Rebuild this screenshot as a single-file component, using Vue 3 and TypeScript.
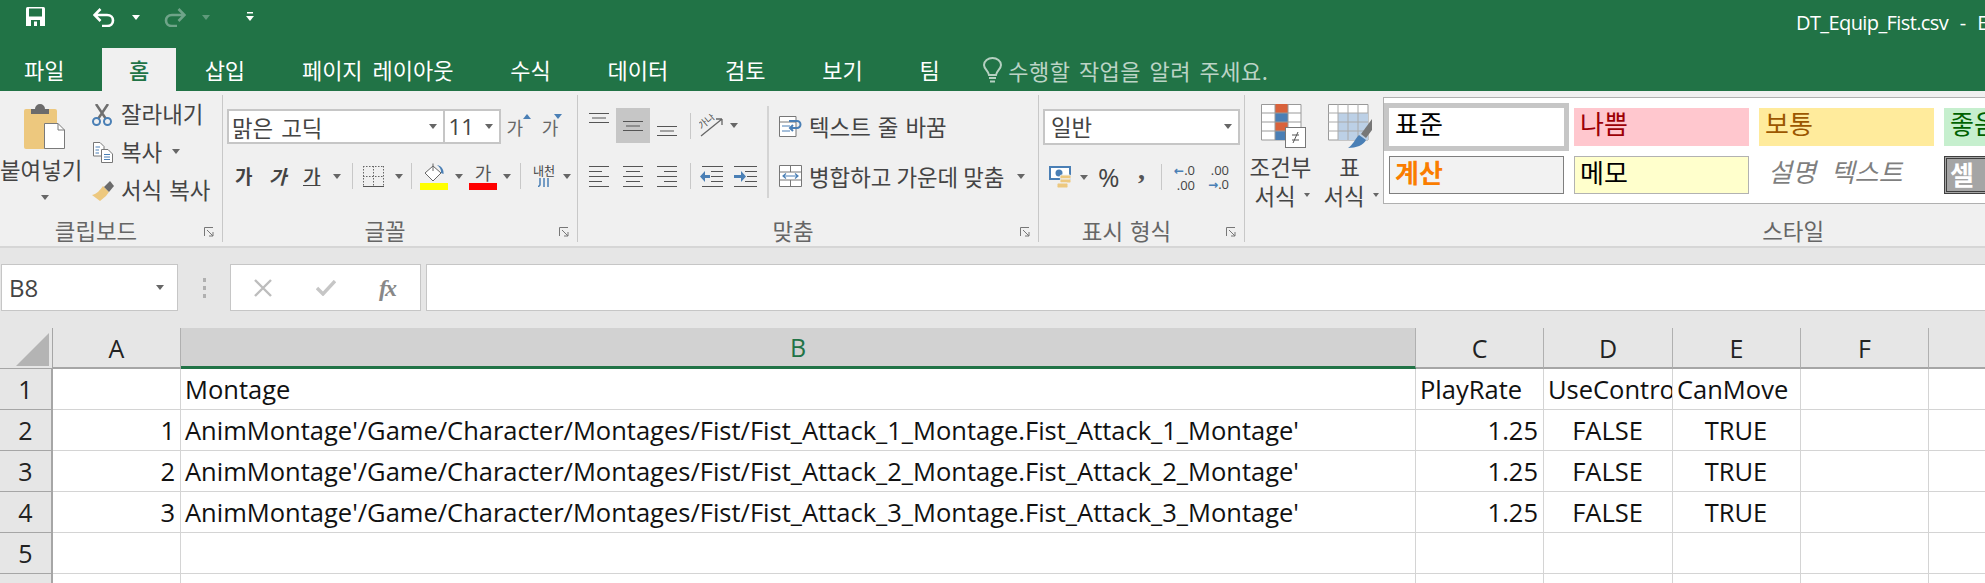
<script setup lang="ts">
interface Cell { text: string; align?: 'right' | 'center' }

const columns: string[] = ['A', 'B', 'C', 'D', 'E', 'F', '']
const path = (n: number): string =>
  `AnimMontage'/Game/Character/Montages/Fist/Fist_Attack_${n}_Montage.Fist_Attack_${n}_Montage'`
const dataRow = (n: number): Cell[] => [
  { text: String(n), align: 'right' },
  { text: path(n) },
  { text: '1.25', align: 'right' },
  { text: 'FALSE', align: 'center' },
  { text: 'TRUE', align: 'center' },
  { text: '' },
  { text: '' },
]
const blank: Cell[] = columns.map(() => ({ text: '' }))
const rows: Cell[][] = [
  [{ text: '' }, { text: 'Montage' }, { text: 'PlayRate' }, { text: 'UseControllerRotation' }, { text: 'CanMove' }, { text: '' }, { text: '' }],
  dataRow(1),
  dataRow(2),
  dataRow(3),
  blank,
  blank,
]
const tabs: string[] = ['삽입', '페이지 레이아웃', '수식', '데이터', '검토', '보기', '팀']
const styleCells: { label: string; cls: string }[] = [
  { label: '표준', cls: 'st-normal' },
  { label: '나쁨', cls: 'st-bad' },
  { label: '보통', cls: 'st-neutral' },
  { label: '좋음', cls: 'st-good' },
  { label: '계산', cls: 'st-calc' },
  { label: '메모', cls: 'st-note' },
  { label: '설명 텍스트', cls: 'st-explain' },
  { label: '셀 확인', cls: 'st-check' },
]
</script>

<template>
  <div class="app">
    <header class="titlebar">
      <svg class="qa-save" width="19" height="19" viewBox="0 0 19 19"><path d="M0 1.5Q0 0 1.5 0H17.5Q19 0 19 1.5V19H0Z" fill="#fff"/><rect x="3" y="1.5" width="13" height="8" fill="#217346"/><rect x="5" y="13" width="9" height="6" fill="#217346"/><rect x="8" y="14.5" width="3" height="4.5" fill="#fff"/></svg>
      <svg class="qa-undo" width="22" height="19" viewBox="0 0 22 19"><path d="M2 7H14C18 7 20 9.500 20 12.500C20 15.500 18 18 14 18H9M7.500 1L1.500 7L7.500 13" fill="none" stroke="#fff" stroke-width="2.600"/></svg>
      <i class="caret caret-white qa-c1"></i>
      <svg class="qa-redo" width="22" height="19" viewBox="0 0 22 19"><path d="M20 7H8C4 7 2 9.500 2 12.500C2 15.500 4 18 8 18H13M14.500 1L20.500 7L14.500 13" fill="none" stroke="#6fa489" stroke-width="2.600"/></svg>
      <i class="caret caret-dim qa-c2"></i>
      <svg class="qa-more" width="8" height="9" viewBox="0 0 8 9"><rect x="1" width="6" height="1.500" fill="#fff"/><path d="M0 4H8L4 9Z" fill="#fff"/></svg>
      <span class="title">DT_Equip_Fist.csv - Excel</span>
    </header>

    <nav class="tabbar">
      <span class="tab tab-file">파일</span>
      <span class="tab tab-home">홈</span>
      <span v-for="t in tabs" :key="t" class="tab">{{ t }}</span>
      <svg class="bulb" width="19" height="26" viewBox="0 0 19 26"><path d="M6 18C5.500 14 1 12 1 8C1 4 5 1 9.500 1C14 1 18 4 18 8C18 12 13.500 14 13 18Z" fill="none" stroke="#b5d0c1" stroke-width="2"/><path d="M6 21H13M7 24.500H12" stroke="#b5d0c1" stroke-width="2.200"/></svg>
      <span class="tell">수행할 작업을 알려 주세요.</span>
    </nav>

    <section class="ribbon">
      <!-- clipboard -->
      <div class="group g-clip">
        <div class="body clip-body">
          <div class="paste">
            <svg class="paste-icon" width="41" height="45" viewBox="0 0 41 45"><rect y="5" width="33" height="40" rx="2" fill="#edc87e"/><path d="M11 5A4 4 0 0 1 21 5H25V10H7V5Z" fill="#6b6b6b"/><path d="M20.500 19.500H34L40.500 26V44.500H20.500Z" fill="#fff" stroke="#7a7a7a"/><path d="M34 19.500V26H40.500" fill="none" stroke="#7a7a7a"/></svg>
            <span class="paste-label">붙여넣기</span>
            <i class="caret paste-caret"></i>
          </div>
          <div class="clip-list">
            <div class="clip-row">
              <svg class="clip-icon" width="20" height="22" viewBox="0 0 20 22"><path d="M4 0L14 15M16 0L6 15" stroke="#6f6f6f" stroke-width="2.500"/><circle cx="4.500" cy="17.500" r="3.500" fill="none" stroke="#4a7fb5" stroke-width="2"/><circle cx="15.500" cy="17.500" r="3.500" fill="none" stroke="#4a7fb5" stroke-width="2"/></svg>
              <span>잘라내기</span>
            </div>
            <div class="clip-row">
              <svg class="clip-icon" width="20" height="21" viewBox="0 0 20 21"><path d="M.500.500H7L11 4.500V14H.500Z" fill="#fff" stroke="#777"/><path d="M8.500 7.500H15L19.500 12V20.500H8.500Z" fill="#fff" stroke="#777"/><path d="M2.500 5H7M2.500 8H6M2.500 11H6M11 12.500H17M11 15H17M11 17.500H17" stroke="#4a7fb5"/></svg>
              <span>복사</span>
              <i class="caret copy-caret"></i>
            </div>
            <div class="clip-row">
              <svg class="clip-icon" width="22" height="20" viewBox="0 0 22 20"><path d="M11 5L17 11L14 15L8 20L0 14C5 13 8 9 11 5Z" fill="#edc87e"/><path d="M12 6L17 11L22 5L18 0Z" fill="#6b6b6b"/></svg>
              <span>서식 복사</span>
            </div>
          </div>
        </div>
        <div class="label">클립보드<svg class="launch" width="10" height="10" viewBox="0 0 10 10"><path d="M.500 9V.500H9M3 3L9 9M9 5V9H5" fill="none" stroke="#777"/></svg></div>
      </div>

      <!-- font -->
      <div class="group g-font">
        <div class="body">
          <div class="font-row1">
            <div class="combo combo-font"><span>맑은 고딕</span><i class="caret"></i></div>
            <div class="combo combo-size"><span>11</span><i class="caret"></i></div>
            <span class="grow grow-up">가<i class="tri-up"></i></span>
            <span class="grow grow-down">가<i class="tri-down"></i></span>
          </div>
          <div class="font-row2">
            <span class="fmt fmt-b">가</span>
            <span class="fmt fmt-i">가</span>
            <span class="fmt fmt-u">가</span>
            <i class="caret"></i>
            <i class="sep sep-a"></i>
            <svg class="border-icon" width="21" height="21" viewBox="0 0 21 21"><path d="M.500 0V20M10.500 0V20M20.500 0V20M0 .500H21M0 10.500H21" stroke="#666" stroke-dasharray="1.500 1.500"/><path d="M0 20.500H21" stroke="#555"/></svg>
            <i class="caret c-border"></i>
            <i class="sep sep-b"></i>
            <span class="swatch">
              <svg width="24" height="19" viewBox="0 0 24 19"><path d="M11 3L19 10L11 18L3 10Z" fill="#fff" stroke="#666"/><path d="M11 0.500V8" stroke="#666"/><path d="M15 2C20 3 22 7 21.500 11L19 10C19.500 7 18 4 15 2Z" fill="#4a7fb5"/></svg>
              <i class="bar bar-yellow"></i>
            </span>
            <i class="caret c-fill"></i>
            <span class="swatch swatch-font">
              <span class="swatch-char">가</span>
              <i class="bar bar-red"></i>
            </span>
            <i class="caret c-color"></i>
            <i class="sep sep-c"></i>
            <span class="phon">
              <span class="phon-text">내천</span>
              <svg width="12" height="9" viewBox="0 0 12 9"><path d="M2 0V7L0 9M6 0V9M10 0V9" fill="none" stroke="#4a7fb5" stroke-width="1.500"/></svg>
            </span>
            <i class="caret c-phon"></i>
          </div>
        </div>
        <div class="label">글꼴<svg class="launch" width="10" height="10" viewBox="0 0 10 10"><path d="M.500 9V.500H9M3 3L9 9M9 5V9H5" fill="none" stroke="#777"/></svg></div>
      </div>

      <!-- alignment -->
      <div class="group g-align">
        <div class="body align-body">
          <div class="align-left">
            <div class="al-row">
              <span class="al-btn"><svg class="al-top" width="20" height="10" viewBox="0 0 20 10"><path d="M0 .500H20M3 5H17M0 9.500H20" stroke="#555"/></svg></span>
              <span class="al-btn al-on"><svg width="20" height="10" viewBox="0 0 20 10"><path d="M0 .500H20M3 5H17M0 9.500H20" stroke="#555"/></svg></span>
              <span class="al-btn"><svg class="al-bot" width="20" height="10" viewBox="0 0 20 10"><path d="M0 .500H20M3 5H17M0 9.500H20" stroke="#555"/></svg></span>
              <i class="sep sep-d"></i>
              <svg class="orient" width="25" height="24" viewBox="0 0 25 24"><path d="M2 22L23 5M23 5H17M23 5V11" fill="none" stroke="#666" stroke-width="1.300"/><text x="0" y="11" font-size="10" fill="#555" transform="rotate(-40 8 10)">가나</text></svg>
              <i class="caret c-orient"></i>
            </div>
            <div class="al-row al-row2">
              <span class="al-btn"><svg width="20" height="21" viewBox="0 0 20 21"><path d="M0 .500H20M0 5.500H13M0 10.500H20M0 15.500H13M0 20.500H20" stroke="#555"/></svg></span>
              <span class="al-btn"><svg width="20" height="21" viewBox="0 0 20 21"><path d="M0 .500H20M3 5.500H17M0 10.500H20M3 15.500H17M0 20.500H20" stroke="#555"/></svg></span>
              <span class="al-btn"><svg width="20" height="21" viewBox="0 0 20 21"><path d="M0 .500H20M7 5.500H20M0 10.500H20M7 15.500H20M0 20.500H20" stroke="#555"/></svg></span>
              <i class="sep sep-d"></i>
              <svg class="indent" width="23" height="21" viewBox="0 0 23 21"><path d="M2 .500H23M11 5.500H23M11 10.500H23M11 15.500H23M2 20.500H23" stroke="#555"/><path d="M0 10.500L5 5V9H10V12H5V16Z" fill="#4a7fb5"/></svg>
              <svg class="outdent" width="23" height="21" viewBox="0 0 23 21"><path d="M0 .500H23M11 5.500H23M13 10.500H23M11 15.500H23M0 20.500H23" stroke="#555"/><path d="M12 10.500L7 5V9H0V12H7V16Z" fill="#4a7fb5"/></svg>
            </div>
          </div>
          <div class="align-right">
            <div class="ar-row">
              <svg width="23" height="21" viewBox="0 0 23 21"><path d="M.500.500H17V20.500H.500Z" fill="#fff" stroke="#777"/><path d="M.500 6H17" stroke="#777"/><path d="M3 10H11M3 15H11" stroke="#4a7fb5"/><path d="M10 5H18A3.500 3.500 0 0 1 18 12H11M14 9L11 12L14 15" fill="none" stroke="#4a7fb5" stroke-width="2"/></svg>
              <span>텍스트 줄 바꿈</span>
            </div>
            <div class="ar-row ar-row2">
              <svg width="23" height="22" viewBox="0 0 23 22"><path d="M.500.500H22.500V21.500H.500Z" fill="#fff" stroke="#777"/><path d="M.500 7H22.500M.500 15H22.500M11.500 0V7M11.500 15V22" stroke="#777"/><path d="M4 11H19M7 8.500L4 11L7 13.500M16 8.500L19 11L16 13.500" fill="none" stroke="#4a7fb5" stroke-width="1.200"/></svg>
              <span class="merge-text">병합하고 가운데 맞춤</span>
              <i class="caret c-merge"></i>
            </div>
          </div>
        </div>
        <div class="label">맞춤<svg class="launch" width="10" height="10" viewBox="0 0 10 10"><path d="M.500 9V.500H9M3 3L9 9M9 5V9H5" fill="none" stroke="#777"/></svg></div>
      </div>

      <!-- number -->
      <div class="group g-num">
        <div class="body">
          <div class="combo combo-num"><span>일반</span><i class="caret"></i></div>
          <div class="num-row">
            <svg class="cur" width="22" height="22" viewBox="0 0 22 22"><rect width="22" height="14" fill="#4a7fb5"/><rect x="2" y="2" width="18" height="10" fill="#fff"/><circle cx="10" cy="7" r="3.500" fill="#4a7fb5"/><rect x="11" y="9" width="11" height="4" rx="1.500" fill="#edc87e" stroke="#f0f0f0"/><rect x="11" y="13" width="11" height="4" rx="1.500" fill="#edc87e" stroke="#f0f0f0"/><rect x="8" y="17" width="11" height="5" rx="1.500" fill="#edc87e" stroke="#f0f0f0"/></svg>
            <i class="caret c-cur"></i>
            <span class="pct">%</span>
            <span class="comma">,</span>
            <i class="sep sep-e"></i>
            <span class="dec dec-a"><span class="dec-line"><b class="arrow">←</b>.0</span><span class="dec-line">.00</span></span>
            <span class="dec dec-b"><span class="dec-line">.00</span><span class="dec-line"><b class="arrow">→</b>.0</span></span>
          </div>
        </div>
        <div class="label">표시 형식<svg class="launch" width="10" height="10" viewBox="0 0 10 10"><path d="M.500 9V.500H9M3 3L9 9M9 5V9H5" fill="none" stroke="#777"/></svg></div>
      </div>

      <!-- styles -->
      <div class="group g-style">
        <div class="body style-body">
          <div class="big big-cond">
            <svg width="45" height="44" viewBox="0 0 45 44"><path d="M.500.500H40V36H.500Z" fill="#fff" stroke="#999"/><rect x="14" y="0" width="13" height="9" fill="#d9623b"/><rect x="14" y="9" width="13" height="9" fill="#4a7fb5"/><rect x="14" y="18" width="13" height="9" fill="#d9623b"/><rect x="14" y="27" width="13" height="9" fill="#4a7fb5"/><path d="M14 0V36M27 0V36M0 9H40M0 18H40M0 27H40" stroke="#999"/><rect x="24.500" y="23.500" width="20" height="20" fill="#fff" stroke="#777"/><path d="M31 31H38M31 36H38M37 28L32 39" stroke="#555"/></svg>
            <span class="big-t1">조건부</span>
            <span class="big-t2">서식<i class="caret c-big"></i></span>
          </div>
          <div class="big big-table">
            <svg width="44" height="44" viewBox="0 0 44 44"><path d="M.500.500H40V36H.500Z" fill="#fff" stroke="#999"/><rect x="10" y="9" width="30" height="27" fill="#bcd0e6"/><path d="M10 0V36M20 0V36M30 0V36M0 9H40M0 18H40M0 27H40" stroke="#aaa"/><path d="M44 15L33 30L38 34L44 26Z" fill="#777"/><path d="M31 31L38 36C36 41 28 44 20 44C25 41 27 35 31 31Z" fill="#4a7fb5"/></svg>
            <span class="big-t1">표</span>
            <span class="big-t2">서식<i class="caret c-big"></i></span>
          </div>
          <div class="gallery">
            <div v-for="s in styleCells" :key="s.label" class="st" :class="s.cls">{{ s.label }}</div>
          </div>
        </div>
        <div class="label label-style">스타일</div>
      </div>
    </section>

    <section class="formula">
      <div class="namebox"><span>B8</span><i class="caret"></i></div>
      <div class="dots"><i></i><i></i><i></i></div>
      <div class="fx-box">
        <svg width="18" height="18" viewBox="0 0 18 18"><path d="M1 1L17 17M17 1L1 17" stroke="#bdbdbd" stroke-width="2.400"/></svg>
        <svg width="20" height="16" viewBox="0 0 20 16"><path d="M1 8L7 14L19 1" fill="none" stroke="#c6c6c6" stroke-width="3.400"/></svg>
        <span class="fx">fx</span>
      </div>
      <div class="fbar"></div>
    </section>

    <section class="sheet">
      <div class="hd corner"><svg width="33" height="33" viewBox="0 0 33 33"><path d="M33 0V33H0Z" fill="#b4b4b4"/></svg></div>
      <div v-for="c in columns" :key="c" class="hd col" :class="{ 'col-on': c === 'B' }">{{ c }}</div>
      <template v-for="(row, r) in rows" :key="r">
        <div class="hd rowh">{{ r + 1 }}</div>
        <div v-for="(cell, i) in row" :key="i" class="cell" :class="cell.align">{{ cell.text }}</div>
      </template>
    </section>
  </div>
</template>

<style>
html, body { margin: 0; overflow: hidden; background: #fff; }
</style>

<style scoped>
.app {
  width: 1985px; height: 583px; overflow: hidden; display: flex; flex-direction: column;
  font-family: "Noto Sans CJK KR", "Noto Sans", sans-serif; font-size: 22.4px; word-spacing: 2px; color: #444;
}
i { display: block; font-style: normal; flex: none; }
svg { display: block; flex: none; }
.caret { width: 0; height: 0; border-style: solid; border-width: 5px 4px 0; border-color: #666 transparent transparent; }
.caret-white { border-top-color: #fff; }
.caret-dim { border-top-color: #5f9a7b; }

.titlebar { height: 48px; background: #217346; display: flex; align-items: flex-start; color: #fff; flex: none; }
.qa-save { margin: 7px 0 0 26px; }
.qa-undo { margin: 8px 0 0 48px; }
.qa-c1 { margin: 15px 0 0 17px; }
.qa-redo { margin: 8px 0 0 24px; }
.qa-c2 { margin: 15px 0 0 16px; }
.qa-more { margin: 12px 0 0 36px; }
.title { margin-left: auto; width: 189px; white-space: nowrap; overflow: hidden; font: 20px/46px "Open Sans", sans-serif; letter-spacing: -.6px; word-spacing: 7px; }

.tabbar { height: 43px; background: #217346; display: flex; align-items: center; color: #fff; flex: none; font-size: 22px; word-spacing: 5px; }
.tab { padding: 0 28.4px; white-space: nowrap; line-height: 43px; }
.tab-file { padding: 0 37.5px 0 24px; }
.tab-home { background: #f0f0f0; color: #217346; padding: 0 27px; font-weight: 500; }
.bulb { margin-left: 15px; }
.tell { margin-left: 6px; color: #bcd4c6; white-space: nowrap; letter-spacing: .5px; word-spacing: 3px; }

.ribbon { height: 155px; background: #f0f0f0; border-bottom: 2px solid #d6d6d6; display: flex; flex: none; box-sizing: content-box; }
.group { display: flex; flex-direction: column; height: 147px; margin-top: 4px; border-right: 1px solid #c8c8c8; flex: none; }
.g-clip { width: 222px; }
.g-font { width: 354px; }
.g-align { width: 460px; }
.g-num { width: 205px; }
.g-style { flex: 1; border-right: 0; min-width: 0; }
.body { height: 118px; flex: none; }
.label { height: 24px; padding: 5px 30px 0 0; line-height: 24px; text-align: center; color: #666; position: relative; white-space: nowrap; }
.launch { position: absolute; right: 8px; top: 14px; }
.label-style { width: 579px; padding-right: 0; text-align: right; }

.clip-body { display: flex; }
.paste { width: 92px; display: flex; flex-direction: column; }
.paste-icon { margin: 9px 0 0 24px; }
.paste-label { line-height: 30px; margin-top: 5px; white-space: nowrap; }
.paste-caret { margin: 11px 0 0 41px; }
.clip-list { margin-top: -1px; }
.clip-row { height: 38px; display: flex; align-items: center; white-space: nowrap; }
.clip-icon { margin-right: 9px; }
.clip-row:nth-child(1) .clip-icon { margin-top: 3px; }
.clip-row:nth-child(2) .clip-icon { margin: 3px 8px 0 1px; }
.clip-row:nth-child(3) .clip-icon { margin: 3px 7px 0 0; }
.copy-caret { margin-left: 10px; }

.font-row1 { display: flex; padding: 14px 0 0 4px; align-items: center; }
.combo { box-sizing: border-box; height: 35px; border: 2px solid #c6c6c6; background: #fff; display: flex; align-items: center; justify-content: space-between; padding: 0 6px 0 3px; line-height: 30px; color: #444; white-space: nowrap; }
.combo-font { width: 221px; border-right-width: 1px; word-spacing: 3px; }
.combo-size { width: 58px; border-left-width: 1px; margin-right: 6px; font-family: "Open Sans", sans-serif; padding-left: 4px; }
.grow { position: relative; font-size: 18px; width: 36px; line-height: 30px; color: #666; }
.tri-up, .tri-down { position: absolute; left: 16px; width: 0; height: 0; border-style: solid; border-color: transparent; }
.tri-up { top: 2px; border-width: 0 4px 5px; border-bottom-color: #4a7fb5; }
.tri-down { top: 2px; left: 12px; border-width: 5px 4px 0; border-top-color: #4a7fb5; }
.font-row2 { display: flex; align-items: center; height: 30px; padding-left: 12px; margin-top: 17px; }
.fmt { font-size: 19px; color: #444; line-height: 30px; }
.fmt-b { font-weight: 700; width: 34px; }
.fmt-i { font-style: italic; font-weight: 700; width: 34px; }
.fmt-u { text-decoration: underline; font-weight: 500; width: 30px; }
.sep { width: 1px; background: #c8c8c8; }
.sep-a { height: 26px; margin-left: 11px; }
.border-icon { margin-left: 10px; }
.c-border { margin-left: 11px; }
.sep-b { height: 26px; margin-left: 8px; }
.swatch { margin-left: 8px; width: 28px; display: flex; flex-direction: column; align-items: center; height: 27px; margin-top: 1px; }
.bar { width: 28px; height: 7px; margin-top: 1px; }
.bar-yellow { background: #ffff00; }
.bar-red { background: #ff0000; }
.c-fill { margin-left: 7px; }
.swatch-font { margin-left: 6px; }
.swatch-char { font-size: 18px; line-height: 19px; height: 19px; color: #555; }
.c-color { margin-left: 6px; }
.sep-c { height: 26px; margin-left: 9px; }
.phon { margin-left: 11px; width: 24px; display: flex; flex-direction: column; align-items: center; height: 26px; }
.phon-text { font-size: 12px; line-height: 15px; white-space: nowrap; }
.c-phon { margin-left: 7px; }

.align-body { display: flex; }
.align-left { box-sizing: border-box; width: 191px; height: 92px; margin-top: 11px; border-right: 2px solid #d4d4d4; padding: 2px 0 0 4px; }
.al-row { display: flex; align-items: center; height: 35px; }
.al-row2 { margin-top: 15px; height: 36px; }
.al-btn { width: 34px; height: 35px; display: flex; justify-content: center; align-items: center; flex: none; }
.al-on { background: #c6c6c6; }
.al-top { transform: translateY(-8px); }
.al-bot { transform: translateY(5px); }
.sep-d { height: 26px; margin-left: 6px; }
.orient { margin-left: 8px; }
.c-orient { margin-left: 6px; }
.indent { margin-left: 9px; }
.outdent { margin-left: 11px; }
.align-right { padding: 13px 0 0 10px; white-space: nowrap; }
.ar-row { display: flex; align-items: center; gap: 7px; height: 36px; }
.ar-row2 { margin-top: 14px; }
.merge-text { word-spacing: 0; }
.c-merge { margin-left: 6px; }

.combo-num { width: 197px; margin: 14px 0 0 4px; height: 36px; padding: 0 6px 2px 6px; }
.num-row { display: flex; align-items: center; height: 30px; margin-top: 17px; padding-left: 10px; }
.c-cur { margin-left: 9px; }
.pct { width: 24px; margin-left: 10px; font: 26px/30px "Open Sans", sans-serif; }
.comma { margin-left: 16px; font: 700 28px/18px "Liberation Serif", serif; width: 8px; transform: translateY(-7px); color: #555; }
.sep-e { height: 26px; margin-left: 15px; }
.dec { display: flex; flex-direction: column; width: 22px; font: 13px/14px "Open Sans", sans-serif; text-align: right; white-space: nowrap; }
.dec-a { margin-left: 11px; }
.dec-b { margin-left: 12px; }
.arrow { color: #4a7fb5; font-weight: 700; font-size: 12px; font-family: "DejaVu Sans", sans-serif; }

.style-body { display: flex; width: 740px; }
.big { display: flex; flex-direction: column; align-items: center; flex: none; padding-top: 9px; white-space: nowrap; }
.big-cond { width: 71px; }
.big-table { width: 67px; }
.big-cond svg { margin-left: 5px; }
.big-t1 { line-height: 26px; margin-top: 5px; }
.big-t2 { line-height: 26px; margin-top: 3px; display: flex; align-items: center; gap: 8px; padding-left: 3px; }
.c-big { border-width: 4px 3px 0; }
.gallery {
  box-sizing: border-box; flex: none; width: 740px; height: 107px; margin-top: 2px;
  border: 1px solid #b0b0b0; border-right: 0; background: #fff; padding: 10px 0 0 5px;
  display: grid; grid-template-columns: repeat(4, 175px); grid-auto-rows: 38px; gap: 10px;
}
.st { box-sizing: border-box; font-size: 26px; line-height: 30px; padding-left: 6px; white-space: nowrap; overflow: hidden; }
.st-normal { color: #000; background: #fff; box-shadow: 0 0 0 5px #c6c6c6; }
.st-bad { background: #ffc7ce; color: #9c0006; }
.st-neutral { background: #ffeb9c; color: #9c5700; }
.st-good { background: #c6efce; color: #006100; }
.st-calc { background: #f2f2f2; border: 1px solid #7f7f7f; color: #fa7d00; font-weight: 700; padding-left: 5px; }
.st-note { background: #ffffcc; border: 1px solid #b2b2b2; color: #000; padding-left: 5px; }
.st-explain { color: #7f7f7f; font-style: italic; word-spacing: 9px; padding-left: 9px; }
.st-check { background: #a5a5a5; border: 3px double #3f3f3f; color: #fff; font-weight: 700; padding-left: 3px; word-spacing: 8px; }

.formula { height: 80px; background: #e6e6e6; display: flex; flex: none; padding: 16px 0 0 1px; box-sizing: border-box; align-items: flex-start; }
.namebox, .fx-box, .fbar { box-sizing: border-box; height: 47px; background: #fff; border: 1px solid #c6c6c6; }
.namebox { width: 177px; display: flex; align-items: center; justify-content: space-between; padding: 0 13px 0 7px; font: 24px/45px "Open Sans", sans-serif; color: #444; }
.dots { width: 52px; height: 47px; display: flex; flex-direction: column; align-items: center; justify-content: center; gap: 4px; }
.dots i { width: 3px; height: 4px; background: #b0b0b0; }
.fx-box { width: 191px; display: flex; align-items: center; padding-left: 23px; gap: 44px; }
.fx { font: italic 700 24px/40px "Liberation Serif", serif; color: #888; margin-left: -1px; letter-spacing: -2px; }
.fbar { flex: 1; margin-left: 5px; border-right: 0; }

.sheet {
  flex: 1; display: grid; min-height: 0;
  grid-template-columns: 53px 128px 1235px 128px 129px 128px 128px 57px;
  grid-auto-rows: 41px;
  font-family: "Open Sans", "Noto Sans", sans-serif; font-size: 25.5px; word-spacing: 0; color: #111;
}
.hd { background: #e6e6e6; box-sizing: border-box; display: flex; align-items: center; justify-content: center; color: #222; font-size: 25px; }
.corner { border-right: 1px solid #a6a6a6; border-bottom: 1px solid #a6a6a6; align-items: flex-start; justify-content: flex-end; padding: 5px 3px 0 0; }
.col { border-right: 1px solid #b0b0b0; border-bottom: 2px solid #a6a6a6; }
.col-on { background: #d2d2d2; color: #217346; border-bottom: 3px solid #217346; }
.rowh { border-right: 2px solid #a6a6a6; border-bottom: 1px solid #a6a6a6; }
.cell { box-sizing: border-box; border-right: 1px solid #d4d4d4; border-bottom: 1px solid #d4d4d4; padding: 0 5px 0 4px; line-height: 40px; white-space: nowrap; overflow: hidden; color: #111; }
.right { text-align: right; }
.center { text-align: center; }
</style>
